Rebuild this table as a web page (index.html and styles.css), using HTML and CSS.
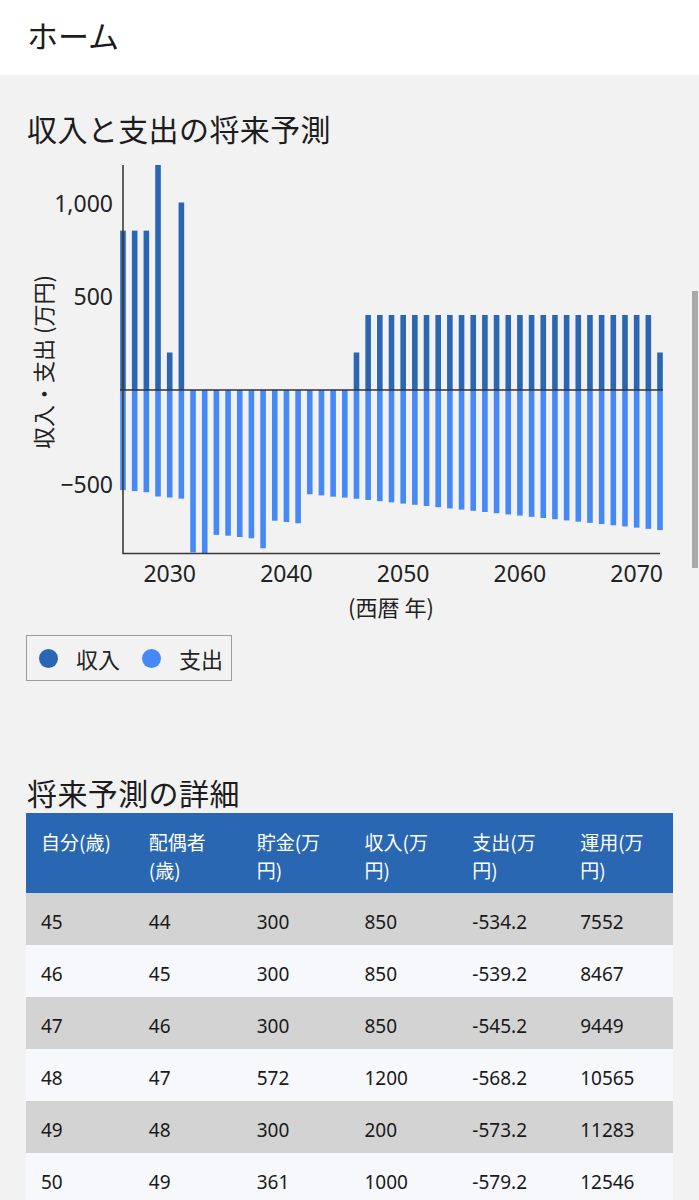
FILE: index.html
```html
<!DOCTYPE html>
<html lang="ja">
<head>
<meta charset="utf-8">
<title>ホーム</title>
<link rel="stylesheet" href="styles.css">
</head>
<body>
<header class="topbar">
  <h1 class="topbar-title">ホーム</h1>
</header>
<main class="content">
  <section class="chart-section">
    <h2 class="section-title">収入と支出の将来予測</h2>
    <svg class="chart" width="647" height="476" viewBox="0 0 647 476" xmlns="http://www.w3.org/2000/svg">
      <g class="bars-income">
        <rect x="94.2" y="80.63" width="5.6" height="159.37"/>
        <rect x="105.87" y="80.63" width="5.6" height="159.37"/>
        <rect x="117.55" y="80.63" width="5.6" height="159.37"/>
        <rect x="129.22" y="15" width="5.6" height="225"/>
        <rect x="140.9" y="202.5" width="5.6" height="37.5"/>
        <rect x="152.57" y="52.5" width="5.6" height="187.5"/>
        <rect x="327.68" y="202.5" width="5.6" height="37.5"/>
        <rect x="339.35" y="165" width="5.6" height="75"/>
        <rect x="351.03" y="165" width="5.6" height="75"/>
        <rect x="362.7" y="165" width="5.6" height="75"/>
        <rect x="374.38" y="165" width="5.6" height="75"/>
        <rect x="386.05" y="165" width="5.6" height="75"/>
        <rect x="397.72" y="165" width="5.6" height="75"/>
        <rect x="409.4" y="165" width="5.6" height="75"/>
        <rect x="421.07" y="165" width="5.6" height="75"/>
        <rect x="432.75" y="165" width="5.6" height="75"/>
        <rect x="444.42" y="165" width="5.6" height="75"/>
        <rect x="456.09" y="165" width="5.6" height="75"/>
        <rect x="467.77" y="165" width="5.6" height="75"/>
        <rect x="479.44" y="165" width="5.6" height="75"/>
        <rect x="491.12" y="165" width="5.6" height="75"/>
        <rect x="502.79" y="165" width="5.6" height="75"/>
        <rect x="514.46" y="165" width="5.6" height="75"/>
        <rect x="526.14" y="165" width="5.6" height="75"/>
        <rect x="537.81" y="165" width="5.6" height="75"/>
        <rect x="549.49" y="165" width="5.6" height="75"/>
        <rect x="561.16" y="165" width="5.6" height="75"/>
        <rect x="572.83" y="165" width="5.6" height="75"/>
        <rect x="584.51" y="165" width="5.6" height="75"/>
        <rect x="596.18" y="165" width="5.6" height="75"/>
        <rect x="607.86" y="165" width="5.6" height="75"/>
        <rect x="619.53" y="165" width="5.6" height="75"/>
        <rect x="631.2" y="202.5" width="5.6" height="37.5"/>
      </g>
      <g class="bars-expense">
        <rect x="94.2" y="240" width="5.6" height="100.16"/>
        <rect x="105.87" y="240" width="5.6" height="101.1"/>
        <rect x="117.55" y="240" width="5.6" height="102.2"/>
        <rect x="129.22" y="240" width="5.6" height="106.5"/>
        <rect x="140.9" y="240" width="5.6" height="107.5"/>
        <rect x="152.57" y="240" width="5.6" height="108.6"/>
        <rect x="164.24" y="240" width="5.6" height="162.4"/>
        <rect x="175.92" y="240" width="5.6" height="163.7"/>
        <rect x="187.59" y="240" width="5.6" height="144.9"/>
        <rect x="199.27" y="240" width="5.6" height="145.7"/>
        <rect x="210.94" y="240" width="5.6" height="147"/>
        <rect x="222.61" y="240" width="5.6" height="148.3"/>
        <rect x="234.29" y="240" width="5.6" height="158.25"/>
        <rect x="245.96" y="240" width="5.6" height="130.7"/>
        <rect x="257.64" y="240" width="5.6" height="132"/>
        <rect x="269.31" y="240" width="5.6" height="133.3"/>
        <rect x="280.98" y="240" width="5.6" height="104.25"/>
        <rect x="292.66" y="240" width="5.6" height="105.4"/>
        <rect x="304.33" y="240" width="5.6" height="106.7"/>
        <rect x="316.01" y="240" width="5.6" height="107.6"/>
        <rect x="327.68" y="240" width="5.6" height="108.75"/>
        <rect x="339.35" y="240" width="5.6" height="109.95"/>
        <rect x="351.03" y="240" width="5.6" height="111.16"/>
        <rect x="362.7" y="240" width="5.6" height="112.36"/>
        <rect x="374.38" y="240" width="5.6" height="113.57"/>
        <rect x="386.05" y="240" width="5.6" height="114.77"/>
        <rect x="397.72" y="240" width="5.6" height="115.98"/>
        <rect x="409.4" y="240" width="5.6" height="117.18"/>
        <rect x="421.07" y="240" width="5.6" height="118.38"/>
        <rect x="432.75" y="240" width="5.6" height="119.59"/>
        <rect x="444.42" y="240" width="5.6" height="120.79"/>
        <rect x="456.09" y="240" width="5.6" height="122"/>
        <rect x="467.77" y="240" width="5.6" height="123.2"/>
        <rect x="479.44" y="240" width="5.6" height="124.41"/>
        <rect x="491.12" y="240" width="5.6" height="125.61"/>
        <rect x="502.79" y="240" width="5.6" height="126.81"/>
        <rect x="514.46" y="240" width="5.6" height="128.02"/>
        <rect x="526.14" y="240" width="5.6" height="129.22"/>
        <rect x="537.81" y="240" width="5.6" height="130.43"/>
        <rect x="549.49" y="240" width="5.6" height="131.63"/>
        <rect x="561.16" y="240" width="5.6" height="132.84"/>
        <rect x="572.83" y="240" width="5.6" height="134.04"/>
        <rect x="584.51" y="240" width="5.6" height="135.25"/>
        <rect x="596.18" y="240" width="5.6" height="136.45"/>
        <rect x="607.86" y="240" width="5.6" height="137.65"/>
        <rect x="619.53" y="240" width="5.6" height="138.86"/>
        <rect x="631.2" y="240" width="5.6" height="140.06"/>
      </g>
      <line class="zero-line" x1="94" y1="240" x2="637" y2="240"/>
      <path class="axis" d="M97 15 V403.5 H634"/>
      <g class="tick-y">
        <text x="87" y="52.5">1,000</text>
        <text x="87" y="146.25">500</text>
        <text x="87" y="333.75">−500</text>
      </g>
      <g class="tick-x">
        <text x="143.7" y="423">2030</text>
        <text x="260.44" y="423">2040</text>
        <text x="377.18" y="423">2050</text>
        <text x="493.92" y="423">2060</text>
        <text x="610.66" y="423">2070</text>
      </g>
      <text class="axis-title" x="365" y="456">(西暦 年)</text>
      <text class="axis-title" transform="translate(16 212) rotate(-90)">収入・支出 (万円)</text>
    </svg>
    <div class="legend">
      <span class="legend-item"><span class="legend-dot legend-dot-income"></span>収入</span>
      <span class="legend-item"><span class="legend-dot legend-dot-expense"></span>支出</span>
    </div>
  </section>

  <section class="detail-section">
    <h2 class="section-title detail-title">将来予測の詳細</h2>
    <table class="detail-table">
      <thead>
        <tr>
          <th>自分(歳)</th>
          <th>配偶者<br>(歳)</th>
          <th>貯金(万<br>円)</th>
          <th>収入(万<br>円)</th>
          <th>支出(万<br>円)</th>
          <th>運用(万<br>円)</th>
        </tr>
      </thead>
      <tbody>
        <tr><td>45</td><td>44</td><td>300</td><td>850</td><td>-534.2</td><td>7552</td></tr>
        <tr><td>46</td><td>45</td><td>300</td><td>850</td><td>-539.2</td><td>8467</td></tr>
        <tr><td>47</td><td>46</td><td>300</td><td>850</td><td>-545.2</td><td>9449</td></tr>
        <tr><td>48</td><td>47</td><td>572</td><td>1200</td><td>-568.2</td><td>10565</td></tr>
        <tr><td>49</td><td>48</td><td>300</td><td>200</td><td>-573.2</td><td>11283</td></tr>
        <tr><td>50</td><td>49</td><td>361</td><td>1000</td><td>-579.2</td><td>12546</td></tr>
      </tbody>
    </table>
  </section>
</main>
<div class="scroll-indicator"></div>
</body>
</html>
```

FILE: styles.css
```css
html, body {
  margin: 0;
  padding: 0;
}

body {
  background: #f2f2f2;
  color: #1c1c1c;
  font-family: "Noto Sans", "Noto Sans CJK JP", sans-serif;
  overflow: hidden;
}

.topbar {
  background: #ffffff;
  height: 75px;
  padding-left: 27px;
  display: flex;
  align-items: center;
}

.topbar-title {
  margin: 0;
  font-family: "Noto Sans CJK JP", sans-serif;
  font-weight: 400;
  font-size: 31px;
  line-height: 40px;
  color: #1c1c1c;
  position: relative;
  top: -3px;
}

.content {
  padding: 0 26px;
}

.section-title {
  margin: 33px 0 2px 0;
  font-family: "Noto Sans CJK JP", sans-serif;
  font-weight: 400;
  font-size: 30px;
  line-height: 40px;
  letter-spacing: 0.4px;
  color: #1c1c1c;
  padding-left: 1px;
}

.chart {
  display: block;
}

.bars-income rect {
  fill: #2a66b1;
}

.bars-expense rect {
  fill: #4689f6;
}

.zero-line {
  stroke: #333333;
  stroke-width: 1.6;
}

.axis {
  fill: none;
  stroke: #3a3a3a;
  stroke-width: 1.6;
}

.tick-y text,
.tick-x text,
.axis-title {
  font-family: "Noto Sans", "Noto Sans CJK JP", sans-serif;
  font-size: 23px;
  fill: #222222;
  dominant-baseline: central;
}

.tick-y text {
  text-anchor: end;
}

.tick-x text,
.axis-title {
  text-anchor: middle;
}

.axis-title {
  font-family: "Noto Sans CJK JP", sans-serif;
  font-size: 22px;
}

.legend {
  margin-top: 9px;
  display: inline-flex;
  align-items: center;
  height: 46px;
  box-sizing: border-box;
  border: 1.5px solid #9c9c9c;
  padding: 0 8px 0 12px;
  gap: 22px;
  font-family: "Noto Sans CJK JP", sans-serif;
  font-size: 22px;
  color: #222222;
}

.legend-item {
  display: inline-flex;
  align-items: center;
  gap: 18px;
}

.legend-dot {
  width: 19px;
  height: 19px;
  border-radius: 50%;
  display: inline-block;
}

.legend-dot-income {
  background: #2a66b1;
}

.legend-dot-expense {
  background: #4689f6;
}

.detail-title {
  margin: 91px 0 1px 0;
}

.detail-table {
  width: 100%;
  table-layout: fixed;
  border-collapse: collapse;
  font-size: 19px;
}

.detail-table th {
  background: #2a67b2;
  color: #ffffff;
  font-weight: 400;
  font-size: 19px;
  text-align: left;
  vertical-align: top;
  line-height: 28px;
  padding: 15px 15px 9px 15px;
  height: 80px;
  box-sizing: border-box;
  font-family: "Noto Sans CJK JP", sans-serif;
}

.detail-table td {
  padding: 5px 15px 0 15px;
  height: 52px;
  box-sizing: border-box;
  line-height: 26px;
  color: #1a1a1a;
}

.detail-table tbody tr:nth-child(odd) td {
  background: #d3d3d3;
}

.detail-table tbody tr:nth-child(even) td {
  background: #f7f8fc;
}

.scroll-indicator {
  position: fixed;
  top: 291px;
  right: 1px;
  width: 6px;
  height: 277px;
  background: #a8a8a8;
}
```
